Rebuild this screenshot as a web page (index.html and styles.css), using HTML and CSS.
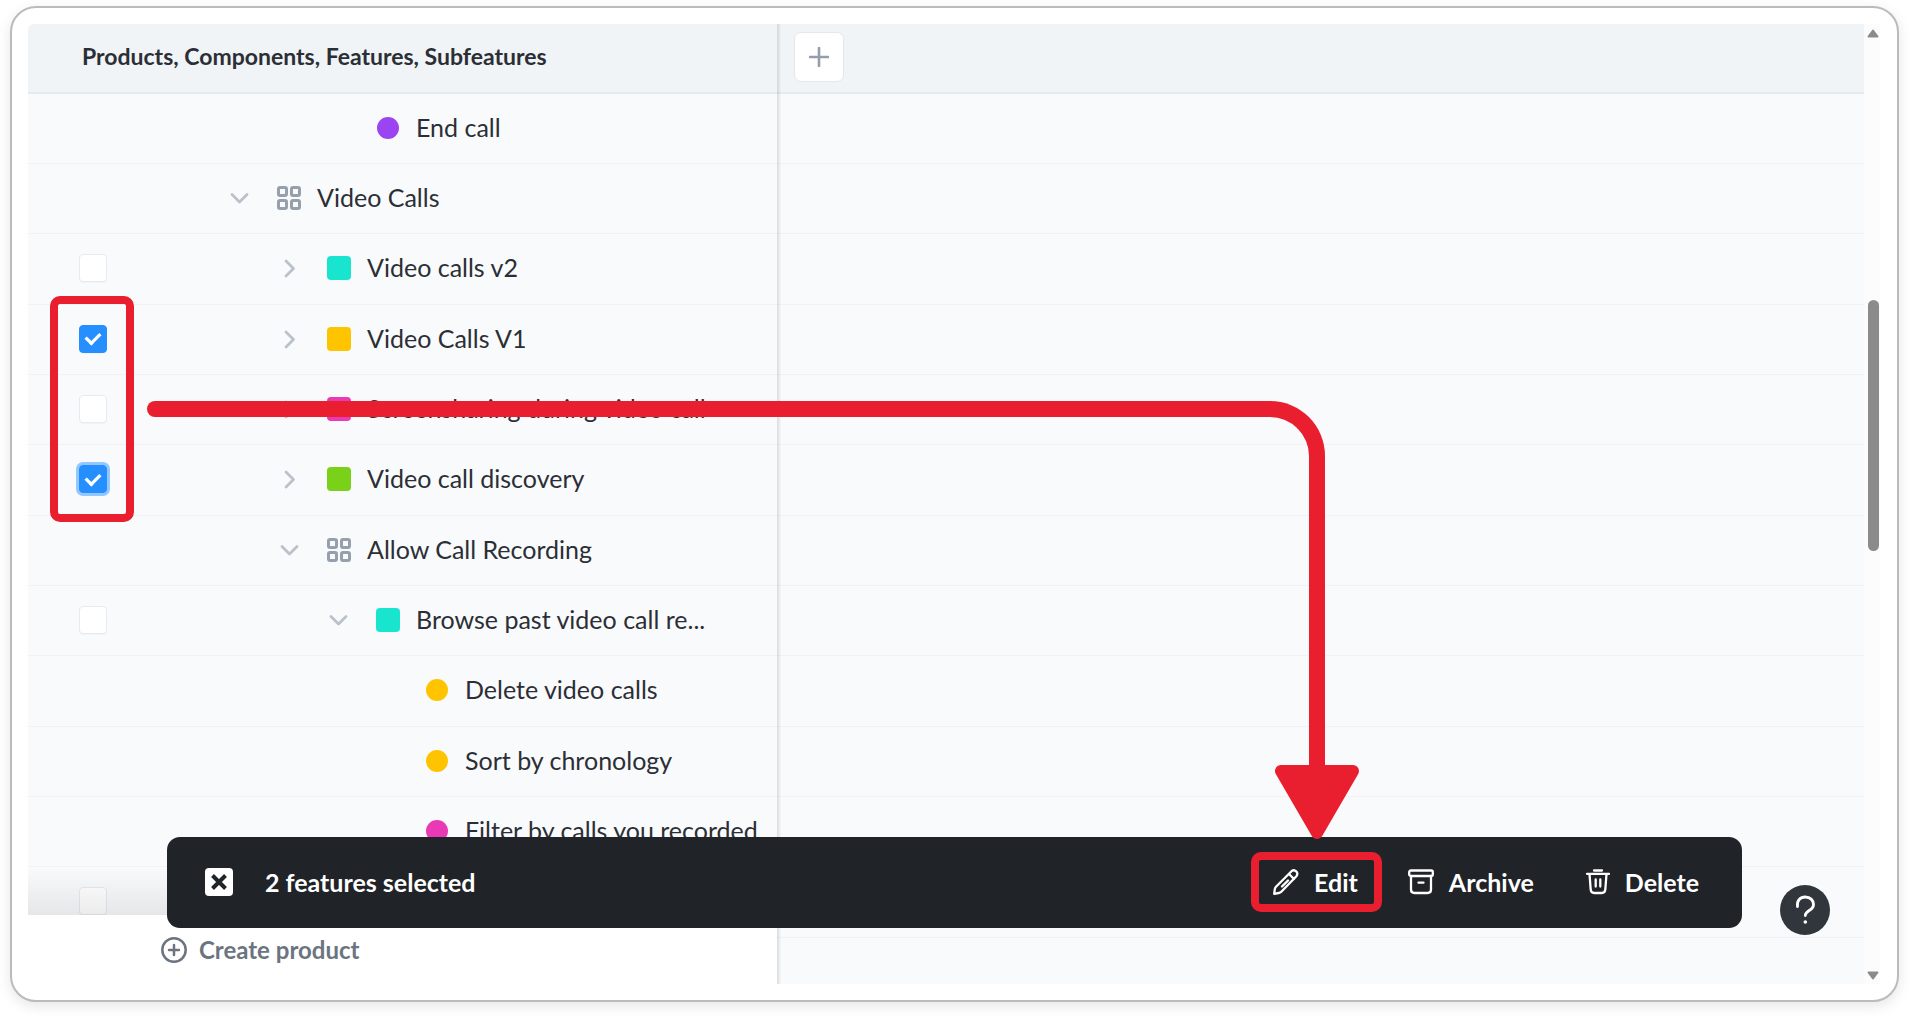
FILE: index.html
```html
<!DOCTYPE html>
<html lang="en">
<head>
    <meta charset="UTF-8">
    <meta name="viewport" content="width=device-width, initial-scale=1.0">
    <title>Features board</title>
    <link rel="stylesheet" href="styles.css">
</head>
<body>
    <svg class="sprite" aria-hidden="true">
        <symbol id="down" viewBox="0 0 24 24"><path d="M4 8.500 11.500 16l7.500-7.500" /></symbol>
        <symbol id="right" viewBox="0 0 24 24"><path d="M8 5 15.500 12.500 8 20" /></symbol>
        <symbol id="component" viewBox="0 0 26 26">
            <rect x="2.500" y="2.500" width="8" height="8" rx="1.500" />
            <rect x="15.500" y="2.500" width="8" height="8" rx="1.500" />
            <rect x="2.500" y="15.500" width="8" height="8" rx="1.500" />
            <rect x="15.500" y="15.500" width="8" height="8" rx="1.500" />
        </symbol>
    </svg>

    <div class="frame">
        <main class="board">
            <header class="board-header">
                <h1>Products, Components, Features, Subfeatures</h1>
                <button class="add-column" aria-label="Add column">
                    <svg viewBox="0 0 20 20"><path d="M10 1v18M1 10h18" /></svg>
                </button>
            </header>

            <ul class="rows">
                <li class="row depth-2">
                    <span class="check"></span>
                    <span class="twisty"></span>
                    <span class="marker"><i class="dot purple"></i></span>
                    <span class="name">End call</span>
                </li>
                <li class="row depth-0">
                    <span class="check"></span>
                    <button class="twisty" aria-label="Collapse"><svg><use href="#down" /></svg></button>
                    <span class="marker"><svg><use href="#component" /></svg></span>
                    <span class="name">Video Calls</span>
                </li>
                <li class="row depth-1">
                    <input class="check" type="checkbox" id="f1">
                    <button class="twisty" aria-label="Expand"><svg><use href="#right" /></svg></button>
                    <span class="marker"><i class="square teal"></i></span>
                    <label class="name" for="f1">Video calls v2</label>
                </li>
                <li class="row depth-1">
                    <input class="check" type="checkbox" id="f2" checked>
                    <button class="twisty" aria-label="Expand"><svg><use href="#right" /></svg></button>
                    <span class="marker"><i class="square yellow"></i></span>
                    <label class="name" for="f2">Video Calls V1</label>
                </li>
                <li class="row depth-1">
                    <input class="check" type="checkbox" id="f3">
                    <button class="twisty" aria-label="Expand"><svg><use href="#right" /></svg></button>
                    <span class="marker"><i class="square pink"></i></span>
                    <label class="name" for="f3">Screensharing during video call</label>
                </li>
                <li class="row depth-1">
                    <input class="check focused" type="checkbox" id="f4" checked>
                    <button class="twisty" aria-label="Expand"><svg><use href="#right" /></svg></button>
                    <span class="marker"><i class="square green"></i></span>
                    <label class="name" for="f4">Video call discovery</label>
                </li>
                <li class="row depth-1">
                    <span class="check"></span>
                    <button class="twisty" aria-label="Collapse"><svg><use href="#down" /></svg></button>
                    <span class="marker"><svg><use href="#component" /></svg></span>
                    <span class="name">Allow Call Recording</span>
                </li>
                <li class="row depth-2">
                    <input class="check" type="checkbox" id="f5">
                    <button class="twisty" aria-label="Collapse"><svg><use href="#down" /></svg></button>
                    <span class="marker"><i class="square teal"></i></span>
                    <label class="name" for="f5">Browse past video call re...</label>
                </li>
                <li class="row depth-3">
                    <span class="check"></span>
                    <span class="twisty"></span>
                    <span class="marker"><i class="dot yellow"></i></span>
                    <span class="name">Delete video calls</span>
                </li>
                <li class="row depth-3">
                    <span class="check"></span>
                    <span class="twisty"></span>
                    <span class="marker"><i class="dot yellow"></i></span>
                    <span class="name">Sort by chronology</span>
                </li>
                <li class="row depth-3">
                    <span class="check"></span>
                    <span class="twisty"></span>
                    <span class="marker"><i class="dot pink"></i></span>
                    <span class="name">Filter by calls you recorded</span>
                </li>
                <li class="row">
                    <input class="check" type="checkbox" id="f6" aria-label="Select feature">
                </li>
            </ul>

            <div class="board-footer">
                <button class="create">
                    <svg viewBox="0 0 26 26"><circle cx="13" cy="13" r="11.700" /><path d="M13 8v10M8 13h10" /></svg>
                    Create product
                </button>
            </div>
        </main>

        <div class="scrollbar">
            <svg viewBox="0 0 12 9"><path d="M6 1.500 10.500 7.500h-9z" /></svg>
            <div class="track">
                <div class="thumb"></div>
            </div>
            <svg viewBox="0 0 12 9"><path d="M6 7.500 10.500 1.500h-9z" /></svg>
        </div>

        <div class="toolbar">
            <button class="clear" aria-label="Clear selection">
                <svg viewBox="0 0 28 28"><path d="m7.500 7.500 13 13M20.500 7.500l-13 13" /></svg>
            </button>
            <span class="count">2 features selected</span>
            <button class="action edit">
                <svg viewBox="0 0 26 26"><path d="M1.200 24.800 1.800 20.200Q2 18.700 3 17.700L18.500 2.200q2.500-2 4.700.200t.200 4.800L8.300 22.800Q7.300 23.800 5.800 24zM16 5l5 5M9 17.500l6-6" /></svg>
                Edit
            </button>
            <button class="action">
                <svg viewBox="0 0 26 26"><rect x="1.200" y="1.500" width="23.600" height="5.500" rx="1.500" /><path d="M3 7v13.500q0 3.500 3.500 3.500h13q3.500 0 3.500-3.500V7M10.500 13.700h5" /></svg>
                Archive
            </button>
            <button class="action">
                <svg viewBox="0 0 26 26"><path d="M10 1.500h8M3 4.800h22M5.500 5l1.200 15.500q.300 3.500 3.500 3.500h7.600q3.200 0 3.500-3.500L22.500 5M11.700 10.500v7M16.300 10.500v7" /></svg>
                Delete
            </button>
        </div>

        <button class="help" aria-label="Help">
            <svg viewBox="0 0 50 50"><path d="M17.500 21.500c-.800-6 2.700-9.500 7.700-9.500 5 0 8.300 3.200 8.300 7.500 0 6.500-8 5.500-8.200 11" /><circle cx="25.300" cy="37" r="1.800" /></svg>
        </button>

        <!-- callouts -->
        <div class="highlight"></div>
        <div class="arrow">
            <svg viewBox="0 0 84 75"><path d="M6 6h72L42 68z" /></svg>
        </div>
    </div>
</body>
</html>
```

FILE: styles.css
```css
* { box-sizing: border-box; }
body { margin: 0; padding: 6px 11px 14px 10px; background: #fff; font-family: Lato, "Open Sans", sans-serif; font-size: 25px; line-height: 30px; color: #2b2f35; }
button { padding: 0; border: none; background: none; font: inherit; color: inherit; cursor: pointer; }
svg { display: block; fill: none; stroke: currentColor; stroke-linecap: round; stroke-linejoin: round; }
.sprite { position: absolute; width: 0; height: 0; }

.frame { position: relative; display: flex; min-height: calc(100vh - 20px); padding: 16px 17px 16px 16px; border: 2px solid #bbb; border-radius: 26px; background: #fff; box-shadow: 0 4px 14px rgba(0,0,0,0.1); }
.board { position: relative; flex: 1; overflow: hidden; border-top-left-radius: 6px; background: #f9fafc; }
.board::after { content: ""; position: absolute; top: 0; bottom: 0; left: 749px; width: 4px; background: linear-gradient(to right, rgba(0,0,0,0.12), rgba(0,0,0,0.01)); }

.board-header { display: flex; align-items: center; height: 70px; padding: 0 16px 4px 54px; border-bottom: 2px solid #e5eaed; background: #f0f4f7; }
.board-header h1 { width: 712px; margin: 0; font-size: 23px; font-weight: 700; }
.add-column { display: flex; align-items: center; justify-content: center; width: 50px; height: 50px; margin-top: 2px; border: 1px solid #e3e8ec; border-radius: 7px; background: #fff; color: #939dab; }
.add-column svg { width: 20px; height: 20px; stroke-width: 2.6; }

.rows { margin: 0; padding: 0 0 46px; list-style: none; }
.row { display: flex; align-items: center; height: 70px; padding: 0 0 2px 51px; border-bottom: 1px solid #f0f2f5; }
.row:nth-child(3n) { height: 71px; }
.check { flex: none; width: 28px; height: 28px; margin: 0; }
input.check { appearance: none; border: 1px solid #e8ebee; border-radius: 4px; background: #fff; box-shadow: 0 1px 1px rgba(0,0,0,0.03); }
input.check:checked { display: flex; align-items: center; justify-content: center; border-color: #268fff; background: #268fff; }
input.check:checked::after { content: ""; width: 14px; height: 8px; margin-bottom: 3px; border: solid #fff; border-width: 0 0 4px 4px; transform: rotate(-45deg) scale(0.8); }
input.focused { box-shadow: 0 0 0 3px #93c7ff; }
.twisty { width: 24px; height: 24px; margin: 0 25px 0 121px; color: #b9c1ca; }
.twisty svg { width: 24px; height: 24px; stroke-width: 2.8; }
.depth-1 .twisty { margin-left: 171px; }
.depth-2 .twisty { margin-left: 220px; }
.depth-3 .twisty { margin-left: 269px; }
.marker { display: flex; justify-content: center; width: 24px; margin-right: 16px; color: #96a0ac; }
.marker svg { flex: none; width: 26px; height: 26px; stroke-width: 3; }
.square { width: 24px; height: 24px; border-radius: 4px; }
.dot { width: 22px; height: 22px; border-radius: 50%; }
.purple { background: #9b45f2; }
.teal { background: #19e5cf; }
.yellow { background: #ffc400; }
.pink { background: #ea39b4; }
.green { background: #79d119; }
.name { padding-bottom: 2px; white-space: nowrap; }

.board-footer { position: absolute; left: 0; bottom: 0; display: flex; align-items: center; width: 749px; height: 69px; padding-left: 133px; background: #fff; }
.board-footer::before { content: ""; position: absolute; left: 0; bottom: 100%; width: 100%; height: 48px; background: linear-gradient(to bottom, rgba(0,0,0,0), rgba(0,0,0,0.08)); }
.create { display: flex; align-items: center; gap: 12px; font-size: 24px; font-weight: 700; color: #6b7480; }
.create svg { width: 26px; height: 26px; stroke-width: 2.5; }

.scrollbar { display: flex; flex-direction: column; align-items: center; width: 16px; padding: 5px 0 4px 2px; background: #fcfcfc; }
.scrollbar svg { width: 12px; height: 9px; fill: #8b8b8b; stroke: #8b8b8b; stroke-width: 2; }
.track { display: flex; flex: 1; flex-direction: column; width: 11px; }
.track::before { content: ""; flex: 262; }
.thumb { flex: 251; border-radius: 6px; background: #8b8b8b; }
.track::after { content: ""; flex: 420; }

.toolbar { position: absolute; left: 155px; right: 155px; bottom: 72px; display: flex; align-items: center; gap: 50px; height: 91px; padding: 0 43px 2px 38px; border-radius: 13px; background: #202328; font-weight: 700; color: #fff; }
.clear { width: 28px; height: 28px; border-radius: 4px; background: #fff; color: #202328; }
.clear svg { width: 28px; height: 28px; stroke-width: 4; stroke-linecap: butt; }
.count { flex: 1; margin-left: -18px; }
.action { position: relative; display: flex; align-items: center; gap: 15px; font-weight: 700; }
.action svg { width: 26px; height: 26px; stroke-width: 2.3; }
.edit::after { content: ""; position: absolute; inset: -15px -24px -15px -22px; border: 8px solid #e91e2e; border-radius: 10px; }
.help { position: absolute; right: 67px; bottom: 65px; width: 50px; height: 50px; border-radius: 50%; background: #31363d; color: #fff; }
.help svg { width: 50px; height: 50px; stroke-width: 2.8; }
.help circle { fill: #fff; stroke: none; }

.highlight { position: absolute; top: 288px; left: 38px; width: 84px; height: 226px; border: 8px solid #e91e2e; border-radius: 10px; pointer-events: none; }
.arrow { position: absolute; top: 393px; right: 572px; bottom: 230px; left: 143px; border: solid #e91e2e; border-width: 16px 16px 0 0; border-top-right-radius: 55px; pointer-events: none; }
.arrow::before { content: ""; position: absolute; top: -16px; left: -8px; width: 16px; height: 16px; border-radius: 50%; background: #e91e2e; }
.arrow svg { position: absolute; right: -50px; bottom: -70px; width: 84px; height: 75px; fill: #e91e2e; stroke: #e91e2e; stroke-width: 12; }
```
